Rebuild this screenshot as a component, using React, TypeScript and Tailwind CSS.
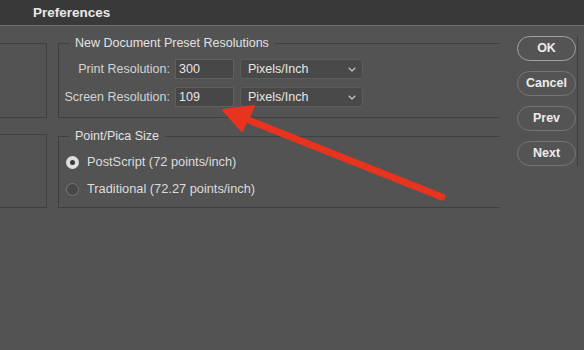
import React from "react";

function Chevron() {
  return (
    <svg width="8" height="5" viewBox="0 0 8 5" className="ml-auto">
      <path d="M1 1 L4 4 L7 1" fill="none" stroke="#cfcfcf" strokeWidth="1.1" strokeLinecap="round" strokeLinejoin="round" />
    </svg>
  );
}

function Row({ label, value }: { label: string; value: string }) {
  return (
    <div className="flex items-center h-[20px]">
      <div className="w-[112px] text-right text-[12.5px] text-[#d4d4d4] pr-[1px]">{label}</div>
      <div className="ml-[4px] w-[59px] h-[20px] bg-[#474747] border border-[#5f5f5f] flex items-center pl-[3px] text-[12.5px] text-[#e6e6e6]">
        {value}
      </div>
      <div className="ml-[6px] w-[123px] h-[20px] bg-[#494949] border border-[#5c5c5c] rounded-[3px] flex items-center pl-[7px] pr-[6px] text-[12.5px] text-[#e6e6e6]">
        <span>Pixels/Inch</span>
        <Chevron />
      </div>
    </div>
  );
}

function Radio({ checked, label }: { checked: boolean; label: string }) {
  return (
    <div className="flex items-center h-[16px]">
      {checked ? (
        <div className="w-[13px] h-[13px] rounded-full bg-[#dedede] flex items-center justify-center">
          <div className="w-[5px] h-[5px] rounded-full bg-[#3a3a3a]" />
        </div>
      ) : (
        <div className="w-[13px] h-[13px] rounded-full bg-[#474747] border border-[#787878]" />
      )}
      <span className="ml-[8px] text-[12.8px] text-[#dcdcdc]">{label}</span>
    </div>
  );
}

function Btn({ label, primary }: { label: string; primary?: boolean }) {
  return (
    <div
      className={
        "w-[59px] h-[25px] rounded-full flex items-center justify-center text-[12.5px] font-bold text-[#ececec] bg-[#545454] " +
        (primary ? "border-[1.5px] border-[#a0a0a0]" : "border border-[#757575]")
      }
    >
      {label}
    </div>
  );
}

export default function App() {
  return (
    <div
      className="relative w-[584px] h-[350px] bg-[#535353] overflow-hidden"
      style={{ fontFamily: '"Liberation Sans", Arial, sans-serif' }}
    >
      <div className="h-[26px] bg-[#393939] border-b border-[#707070] flex items-center pl-[33px]">
        <span className="text-[13.5px] font-bold text-[#e8e8e8] leading-none">Preferences</span>
      </div>

      <div className="flex">
        {/* left panel */}
        <div className="w-[47px] pt-[17px] flex flex-col gap-[16px]">
          <div className="h-[75px] border-y border-r border-[#404040]" />
          <div className="h-[74px] border-y border-r border-[#404040]" />
        </div>

        {/* main */}
        <div className="ml-[11px] w-[442px] pt-[17px] flex flex-col gap-[18px]">
          <div className="h-[75px] border-l border-y border-[#404040]">
            <span className="block w-fit -mt-[9px] ml-[10px] px-[6px] bg-[#535353] text-[12.5px] leading-[16px] text-[#e2e2e2]">
              New Document Preset Resolutions
            </span>
            <div className="mt-[8px] flex flex-col gap-[8px]">
              <Row label="Print Resolution:" value="300" />
              <Row label="Screen Resolution:" value="109" />
            </div>
          </div>

          <div className="h-[72px] border-l border-y border-[#404040]">
            <span className="block w-fit -mt-[9px] ml-[10px] px-[6px] bg-[#535353] text-[12.5px] leading-[16px] text-[#e2e2e2]">
              Point/Pica Size
            </span>
            <div className="mt-[10px] ml-[7px] flex flex-col gap-[11px]">
              <Radio checked label="PostScript (72 points/inch)" />
              <Radio checked={false} label="Traditional (72.27 points/inch)" />
            </div>
          </div>
        </div>

        {/* buttons */}
        <div className="ml-[17px] pt-[10px] flex">
          <div className="flex flex-col gap-[10px]">
            <Btn label="OK" primary />
            <Btn label="Cancel" />
            <Btn label="Prev" />
            <Btn label="Next" />
          </div>
          <div className="ml-[1px] w-[1px] h-[130px] bg-[#3e3e3e]" />
        </div>
      </div>

      {/* annotation arrow */}
      <svg className="absolute left-0 top-0 pointer-events-none" width="584" height="350" viewBox="0 0 584 350">
        <line x1="246" y1="119" x2="442" y2="197" stroke="#e8341f" strokeWidth="7" strokeLinecap="round" />
        <polygon points="223,110 254,106 242,131" fill="#e8341f" stroke="#e8341f" strokeWidth="2" strokeLinejoin="round" />
      </svg>
    </div>
  );
}
